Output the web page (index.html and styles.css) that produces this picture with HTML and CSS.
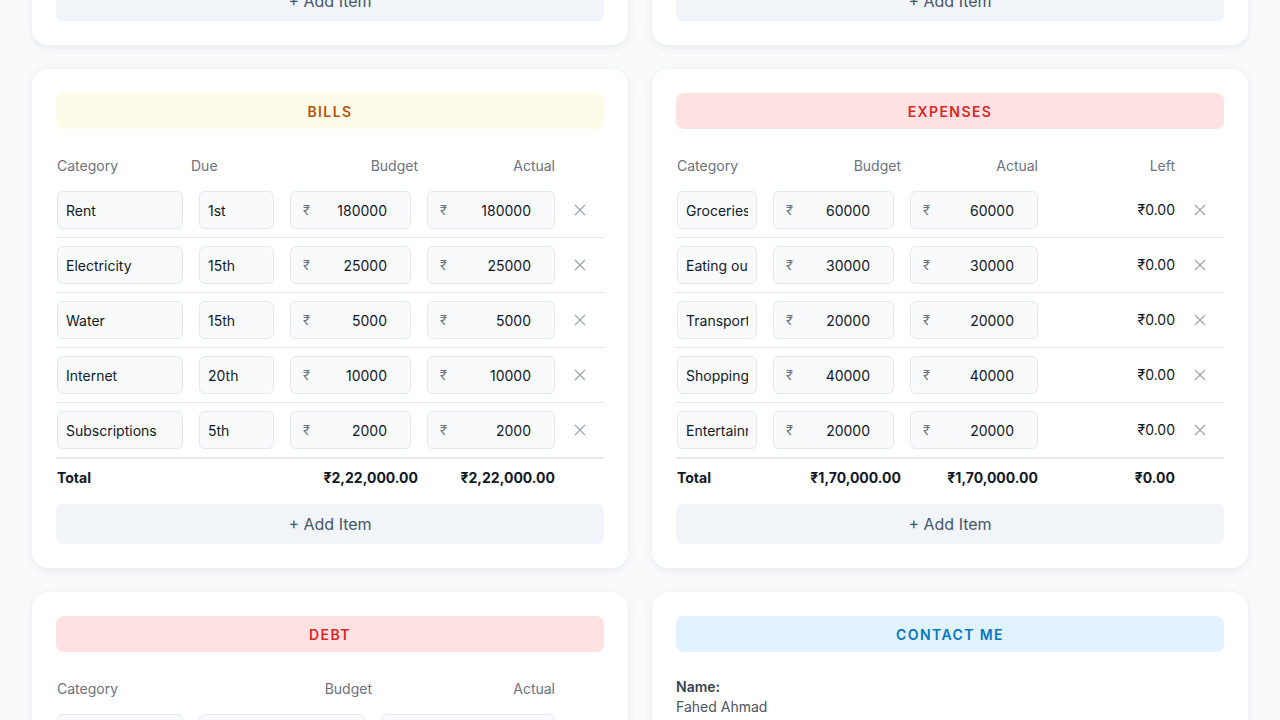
FILE: index.html
```html
<!DOCTYPE html>
<html lang="en">
<head>
    <meta charset="UTF-8">
    <meta name="viewport" content="width=device-width, initial-scale=1.0">
    <title>Budget Planner</title>
    <link rel="stylesheet" href="styles.css">
</head>
<body>
    <main class="dashboard">

        <!-- Income -->
        <section class="card">
            <div class="pill pill-green">INCOME</div>
            <button class="add-btn">+ Add Item</button>
        </section>

        <!-- Savings -->
        <section class="card">
            <div class="pill pill-purple">SAVINGS</div>
            <button class="add-btn">+ Add Item</button>
        </section>

        <!-- Bills -->
        <section class="card cols-bills">
            <div class="pill pill-yellow">BILLS</div>
            <div class="table-head">
                <div>Category</div>
                <div>Due</div>
                <div class="right">Budget</div>
                <div class="right">Actual</div>
                <div></div>
            </div>
            <div class="table-body">
                <div class="table-row">
                    <input class="field field-cat" type="text" value="Rent">
                    <input class="field field-due" type="text" value="1st">
                    <div class="money budget"><span>₹</span><input type="text" value="180000"></div>
                    <div class="money actual"><span>₹</span><input type="text" value="180000"></div>
                    <button class="remove"><svg width="12" height="12" viewBox="0 0 12 12"><path d="M1 1L11 11M11 1L1 11" stroke="currentColor" stroke-width="1.2" fill="none"/></svg></button>
                </div>
                <div class="table-row">
                    <input class="field field-cat" type="text" value="Electricity">
                    <input class="field field-due" type="text" value="15th">
                    <div class="money budget"><span>₹</span><input type="text" value="25000"></div>
                    <div class="money actual"><span>₹</span><input type="text" value="25000"></div>
                    <button class="remove"><svg width="12" height="12" viewBox="0 0 12 12"><path d="M1 1L11 11M11 1L1 11" stroke="currentColor" stroke-width="1.2" fill="none"/></svg></button>
                </div>
                <div class="table-row">
                    <input class="field field-cat" type="text" value="Water">
                    <input class="field field-due" type="text" value="15th">
                    <div class="money budget"><span>₹</span><input type="text" value="5000"></div>
                    <div class="money actual"><span>₹</span><input type="text" value="5000"></div>
                    <button class="remove"><svg width="12" height="12" viewBox="0 0 12 12"><path d="M1 1L11 11M11 1L1 11" stroke="currentColor" stroke-width="1.2" fill="none"/></svg></button>
                </div>
                <div class="table-row">
                    <input class="field field-cat" type="text" value="Internet">
                    <input class="field field-due" type="text" value="20th">
                    <div class="money budget"><span>₹</span><input type="text" value="10000"></div>
                    <div class="money actual"><span>₹</span><input type="text" value="10000"></div>
                    <button class="remove"><svg width="12" height="12" viewBox="0 0 12 12"><path d="M1 1L11 11M11 1L1 11" stroke="currentColor" stroke-width="1.2" fill="none"/></svg></button>
                </div>
                <div class="table-row">
                    <input class="field field-cat" type="text" value="Subscriptions">
                    <input class="field field-due" type="text" value="5th">
                    <div class="money budget"><span>₹</span><input type="text" value="2000"></div>
                    <div class="money actual"><span>₹</span><input type="text" value="2000"></div>
                    <button class="remove"><svg width="12" height="12" viewBox="0 0 12 12"><path d="M1 1L11 11M11 1L1 11" stroke="currentColor" stroke-width="1.2" fill="none"/></svg></button>
                </div>
            </div>
            <div class="table-total">
                <div>Total</div>
                <div></div>
                <div class="right">₹2,22,000.00</div>
                <div class="right">₹2,22,000.00</div>
                <div></div>
            </div>
            <button class="add-btn">+ Add Item</button>
        </section>

        <!-- Expenses -->
        <section class="card cols-expenses">
            <div class="pill pill-red">EXPENSES</div>
            <div class="table-head">
                <div>Category</div>
                <div class="right">Budget</div>
                <div class="right">Actual</div>
                <div class="right">Left</div>
                <div></div>
            </div>
            <div class="table-body">
                <div class="table-row">
                    <input class="field field-cat" type="text" value="Groceries">
                    <div class="money budget"><span>₹</span><input type="text" value="60000"></div>
                    <div class="money actual"><span>₹</span><input type="text" value="60000"></div>
                    <div class="right">₹0.00</div>
                    <button class="remove"><svg width="12" height="12" viewBox="0 0 12 12"><path d="M1 1L11 11M11 1L1 11" stroke="currentColor" stroke-width="1.2" fill="none"/></svg></button>
                </div>
                <div class="table-row">
                    <input class="field field-cat" type="text" value="Eating out">
                    <div class="money budget"><span>₹</span><input type="text" value="30000"></div>
                    <div class="money actual"><span>₹</span><input type="text" value="30000"></div>
                    <div class="right">₹0.00</div>
                    <button class="remove"><svg width="12" height="12" viewBox="0 0 12 12"><path d="M1 1L11 11M11 1L1 11" stroke="currentColor" stroke-width="1.2" fill="none"/></svg></button>
                </div>
                <div class="table-row">
                    <input class="field field-cat" type="text" value="Transport">
                    <div class="money budget"><span>₹</span><input type="text" value="20000"></div>
                    <div class="money actual"><span>₹</span><input type="text" value="20000"></div>
                    <div class="right">₹0.00</div>
                    <button class="remove"><svg width="12" height="12" viewBox="0 0 12 12"><path d="M1 1L11 11M11 1L1 11" stroke="currentColor" stroke-width="1.2" fill="none"/></svg></button>
                </div>
                <div class="table-row">
                    <input class="field field-cat" type="text" value="Shopping">
                    <div class="money budget"><span>₹</span><input type="text" value="40000"></div>
                    <div class="money actual"><span>₹</span><input type="text" value="40000"></div>
                    <div class="right">₹0.00</div>
                    <button class="remove"><svg width="12" height="12" viewBox="0 0 12 12"><path d="M1 1L11 11M11 1L1 11" stroke="currentColor" stroke-width="1.2" fill="none"/></svg></button>
                </div>
                <div class="table-row">
                    <input class="field field-cat" type="text" value="Entertainment">
                    <div class="money budget"><span>₹</span><input type="text" value="20000"></div>
                    <div class="money actual"><span>₹</span><input type="text" value="20000"></div>
                    <div class="right">₹0.00</div>
                    <button class="remove"><svg width="12" height="12" viewBox="0 0 12 12"><path d="M1 1L11 11M11 1L1 11" stroke="currentColor" stroke-width="1.2" fill="none"/></svg></button>
                </div>
            </div>
            <div class="table-total">
                <div>Total</div>
                <div class="right">₹1,70,000.00</div>
                <div class="right">₹1,70,000.00</div>
                <div class="right">₹0.00</div>
                <div></div>
            </div>
            <button class="add-btn">+ Add Item</button>
        </section>

        <!-- Debt -->
        <section class="card cols-debt">
            <div class="pill pill-red">DEBT</div>
            <div class="table-head">
                <div>Category</div>
                <div class="right">Budget</div>
                <div class="right">Actual</div>
                <div></div>
            </div>
            <div class="table-body">
                <div class="table-row">
                    <input class="field field-cat" type="text" value="Credit Card">
                    <div class="money budget"><span>₹</span><input type="text" value="0"></div>
                    <div class="money actual"><span>₹</span><input type="text" value="0"></div>
                    <button class="remove"><svg width="12" height="12" viewBox="0 0 12 12"><path d="M1 1L11 11M11 1L1 11" stroke="currentColor" stroke-width="1.2" fill="none"/></svg></button>
                </div>
                <div class="table-row">
                    <input class="field field-cat" type="text" value="Car Loan">
                    <div class="money budget"><span>₹</span><input type="text" value="0"></div>
                    <div class="money actual"><span>₹</span><input type="text" value="0"></div>
                    <button class="remove"><svg width="12" height="12" viewBox="0 0 12 12"><path d="M1 1L11 11M11 1L1 11" stroke="currentColor" stroke-width="1.2" fill="none"/></svg></button>
                </div>
            </div>
            <div class="table-total">
                <div>Total</div>
                <div class="right">₹0.00</div>
                <div class="right">₹0.00</div>
                <div></div>
            </div>
            <button class="add-btn">+ Add Item</button>
        </section>

        <!-- Contact -->
        <section class="card">
            <div class="pill pill-blue">CONTACT ME</div>
            <div class="contact-info">
                <div class="contact-label">Name:</div>
                <div class="contact-value">Fahed Ahmad</div>
            </div>
        </section>

    </main>
</body>
</html>
```

FILE: styles.css
```css
body {
    margin: 0;
    background-color: #f8fafc;
    font-family: Inter, "Noto Sans", sans-serif;
    color: #111827;
}
.dashboard {
    display: grid;
    grid-template-columns: 1fr 1fr;
    gap: 24px;
    padding: 24px 32px;
    margin-top: -119px;
}
.card {
    background-color: #ffffff;
    border-radius: 16px;
    padding: 24px;
    box-shadow: 0 2px 8px rgba(15, 23, 42, 0.08);
}
.pill {
    height: 36px;
    display: flex;
    align-items: center;
    justify-content: center;
    border-radius: 8px;
    font-size: 14px;
    font-weight: 600;
    letter-spacing: 0.1em;
}
.pill-yellow {
    background-color: #fefce8;
    color: #b45309;
}
.pill-red {
    background-color: #fee2e2;
    color: #dc2626;
}
.pill-blue {
    background-color: #e0f2fe;
    color: #0277bd;
}
.pill-green {
    background-color: #dcfce7;
    color: #15803d;
}
.pill-purple {
    background-color: #ede9fe;
    color: #7c3aed;
}

/* table-like grids */
.table-head,
.table-row,
.table-total {
    display: grid;
    align-items: center;
    font-size: 14px;
    line-height: 20px;
}
.cols-bills .table-head,
.cols-bills .table-row,
.cols-bills .table-total {
    grid-template-columns: 135px 91px 136px 137px 1fr;
}
.cols-expenses .table-head,
.cols-expenses .table-row,
.cols-expenses .table-total {
    grid-template-columns: 89px 136px 137px 137px 1fr;
}
.cols-debt .table-head,
.cols-debt .table-row,
.cols-debt .table-total {
    grid-template-columns: 135px 181px 183px 1fr;
}
.table-head {
    margin-top: 16px;
    padding: 11px 0 7px;
    color: #6b7280;
}
.table-head > :first-child,
.table-total > :first-child {
    padding-left: 1px;
}
.table-row {
    padding: 8px 0;
    border-bottom: 1px solid #e5e7eb;
}
.table-body .table-row:last-child {
    border-bottom: none;
}
.table-total {
    border-top: 2px solid #e5e7eb;
    padding: 9px 0 7px;
    font-weight: 700;
}
.right {
    text-align: right;
}

.field,
.money {
    box-sizing: border-box;
    height: 38px;
    background-color: #f8fafc;
    border: 1px solid #e2e8f0;
    border-radius: 6px;
    font-family: inherit;
    font-size: 14px;
    color: #111827;
}
.field {
    padding: 0 8px;
    outline: none;
}
.field-cat {
    width: calc(100% - 9px);
    margin-left: 1px;
}
.field-due {
    width: calc(100% - 16px);
    margin-left: 8px;
}
.money {
    display: flex;
    align-items: center;
    padding: 0 23px 0 12px;
}
.money.budget {
    margin: 0 7px 0 8px;
}
.money.actual {
    margin-left: 9px;
}
.money span {
    color: #6b7280;
    font-size: 13px;
}
.money input {
    flex: 1;
    min-width: 0;
    border: none;
    background: transparent;
    text-align: right;
    font-family: inherit;
    font-size: 14px;
    color: #111827;
    outline: none;
    padding: 0;
}
.remove {
    margin-left: 16px;
    width: 18px;
    height: 18px;
    padding: 0;
    border: none;
    background: none;
    color: #9ca3af;
    display: flex;
    align-items: center;
    justify-content: center;
    cursor: pointer;
}

.add-btn {
    display: block;
    width: 100%;
    height: 40px;
    margin-top: 9px;
    border: none;
    border-radius: 6px;
    background-color: #f1f5f9;
    color: #475569;
    font-family: inherit;
    font-size: 16px;
    cursor: pointer;
}
.pill + .add-btn {
    margin-top: 16px;
}

.contact-info {
    margin-top: 25px;
    font-size: 14px;
    line-height: 20px;
}
.contact-label {
    font-weight: 600;
    color: #374151;
}
.contact-value {
    color: #4b5563;
}
```
